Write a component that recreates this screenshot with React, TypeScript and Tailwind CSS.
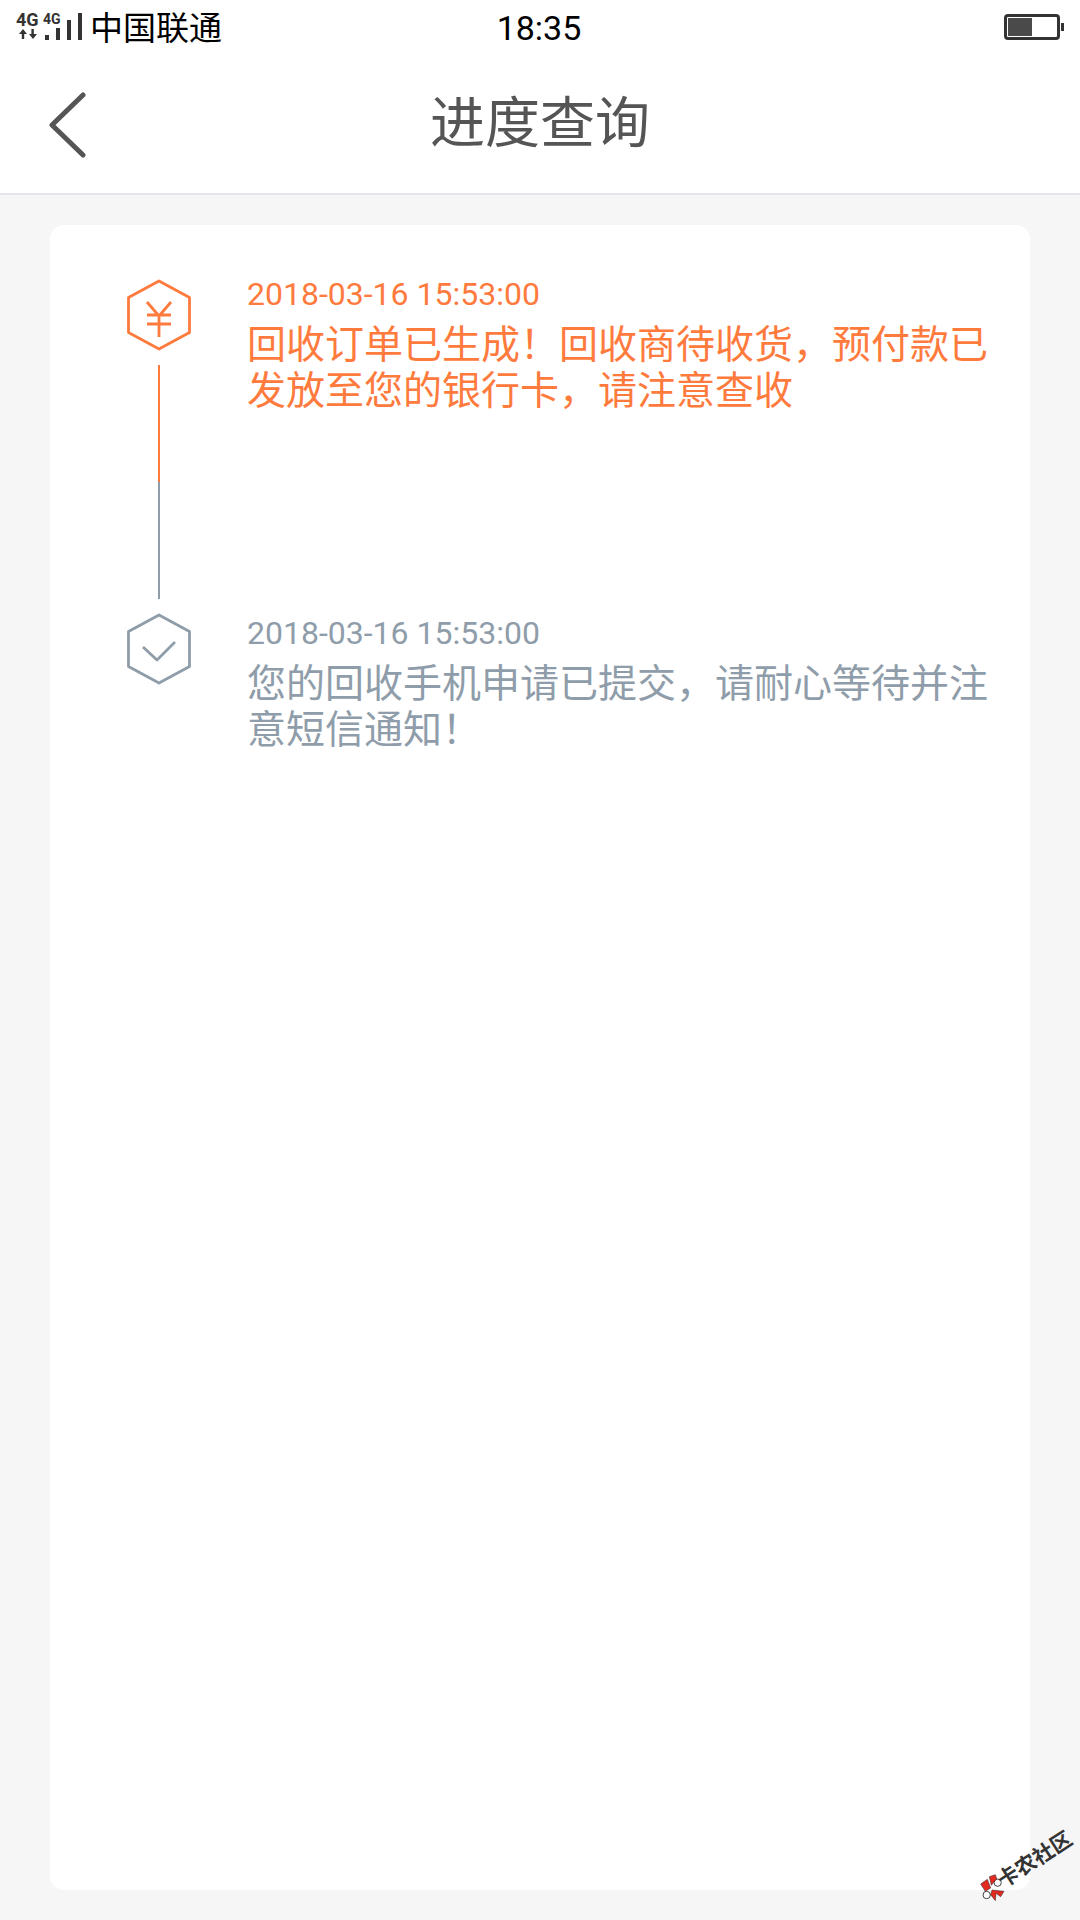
const CJK = "font-['Roboto','Noto_Sans_CJK_SC',sans-serif]";

function Hexagon({ color, children }: { color: string; children: React.ReactNode }) {
  return (
    <svg width="64" height="72" viewBox="0 0 64 72" fill="none" stroke={color} strokeWidth="2.8" strokeLinejoin="round" strokeLinecap="butt" className="block shrink-0">
      <path d="M32 2 L62.5 18.5 V53.5 L32 70 L1.5 53.5 V18.5 Z" />
      {children}
    </svg>
  );
}

function Item({ color, date, lines, yen, last }: { color: string; date: string; lines: string[]; yen?: boolean; last?: boolean }) {
  return (
    <div className={`flex ${last ? "" : "h-[334px]"}`}>
      <div className="flex w-[64px] shrink-0 flex-col items-center">
        <Hexagon color={color}>
          {yen ? (
            <path d="M20 23 L32 37 L44 23 M20 36 H44 M20 45 H44 M32 37 V58" />
          ) : (
            <path d="M16 34 L30 47 L48 29" />
          )}
        </Hexagon>
        {!last && (
          <div className="mt-[14px] flex w-[2px] flex-col">
            <div className="h-[117px] bg-[#ff7a3d]" />
            <div className="h-[117px] bg-[#8f9daa]" />
          </div>
        )}
      </div>
      <div className={`ml-[56px] ${last ? "mt-[1px]" : "-mt-[4px]"}`} style={{ color }}>
        <div className="text-[32px] leading-[38px]">{date}</div>
        <div className="mt-[9px] text-[39px] leading-[46px]">
          {lines.map((l) => (
            <div key={l} className="whitespace-nowrap">{l}</div>
          ))}
        </div>
      </div>
    </div>
  );
}

export default function App() {
  return (
    <div className={`relative flex h-[1920px] w-[1080px] flex-col overflow-hidden bg-[#f6f6f6] ${CJK}`}>
      <div className="relative flex h-[195px] shrink-0 flex-col border-b-2 border-[#e3e6ea] bg-white">
        <div className="relative flex h-[56px] items-center pl-[16px] text-black">
          <svg width="68" height="44" viewBox="0 -6 68 44" className="shrink-0" fill="#333">
            <text x="0" y="14" fontSize="18" fontWeight="700" fontFamily="Roboto">4G</text>
            <text x="27" y="11.5" fontSize="14" fontWeight="700" fontFamily="Roboto">4G</text>
            <path d="M3 22 L7 17 L11 22 H8.2 V27 H5.8 V22 Z M13 22 H15.4 V17 H17.8 V22 H21 L17 27 Z" />
            <rect x="29" y="23" width="4" height="5" />
            <rect x="40" y="16" width="4" height="12" />
            <rect x="51" y="8" width="4" height="20" />
            <rect x="62" y="1" width="4" height="27" />
          </svg>
          <span className="ml-[6px] text-[33px] leading-none">中国联通</span>
          <span className="absolute left-0 right-[2px] text-center text-[34px] leading-none">18:35</span>
          <div className="absolute left-[1004px] top-[14px] flex items-center">
            <div className="h-[26px] w-[56px] rounded-[4px] border-[3px] border-[#333] p-[1px]">
              <div className="h-full w-[24px] bg-[#4a4a4a]" />
            </div>
            <div className="ml-[1px] h-[8px] w-[3px] bg-[#333]" />
          </div>
        </div>
        <div className="relative flex flex-1 items-center justify-center">
          <svg width="40" height="66" viewBox="0 0 40 66" fill="none" stroke="#555" strokeWidth="5" strokeLinecap="round" strokeLinejoin="round" className="absolute left-[49px] top-[36px]">
            <path d="M34 3 L3 33 L34 63" />
          </svg>
          <span className="-mt-[2px] text-[55px] leading-none text-[#555]">进度查询</span>
        </div>
      </div>
      <div className="mx-[50px] mb-[30px] mt-[30px] flex-1 rounded-[14px] bg-white pl-[77px] pt-[54px]">
        <Item color="#ff7a3d" yen date="2018-03-16 15:53:00" lines={["回收订单已生成！回收商待收货，预付款已", "发放至您的银行卡，请注意查收"]} />
        <Item color="#8f9daa" last date="2018-03-16 15:53:00" lines={["您的回收手机申请已提交，请耐心等待并注", "意短信通知！"]} />
      </div>
      <svg width="50" height="50" viewBox="0 0 150 150" className="absolute left-[970px] top-[1860px]">
        <circle cx="83" cy="68" r="11" fill="#fff" stroke="#444" strokeWidth="3" />
        <circle cx="50" cy="105" r="11" fill="#fff" stroke="#444" strokeWidth="3" />
        <path d="M32 72 L52 58 L62 84 L46 94 Z M58 50 L76 44 L80 56 L64 76 Z M66 90 L102 94 L92 110 L78 100 L76 122 L62 104 Z" fill="#e32a20" stroke="#222" strokeWidth="1.5" />
      </svg>
      <div className="absolute left-[992px] top-[1848px] -rotate-[33deg] whitespace-nowrap font-['Noto_Sans_CJK_SC',sans-serif] text-[21px] font-bold leading-[21px] text-[#333]">卡农社区</div>
    </div>
  );
}
